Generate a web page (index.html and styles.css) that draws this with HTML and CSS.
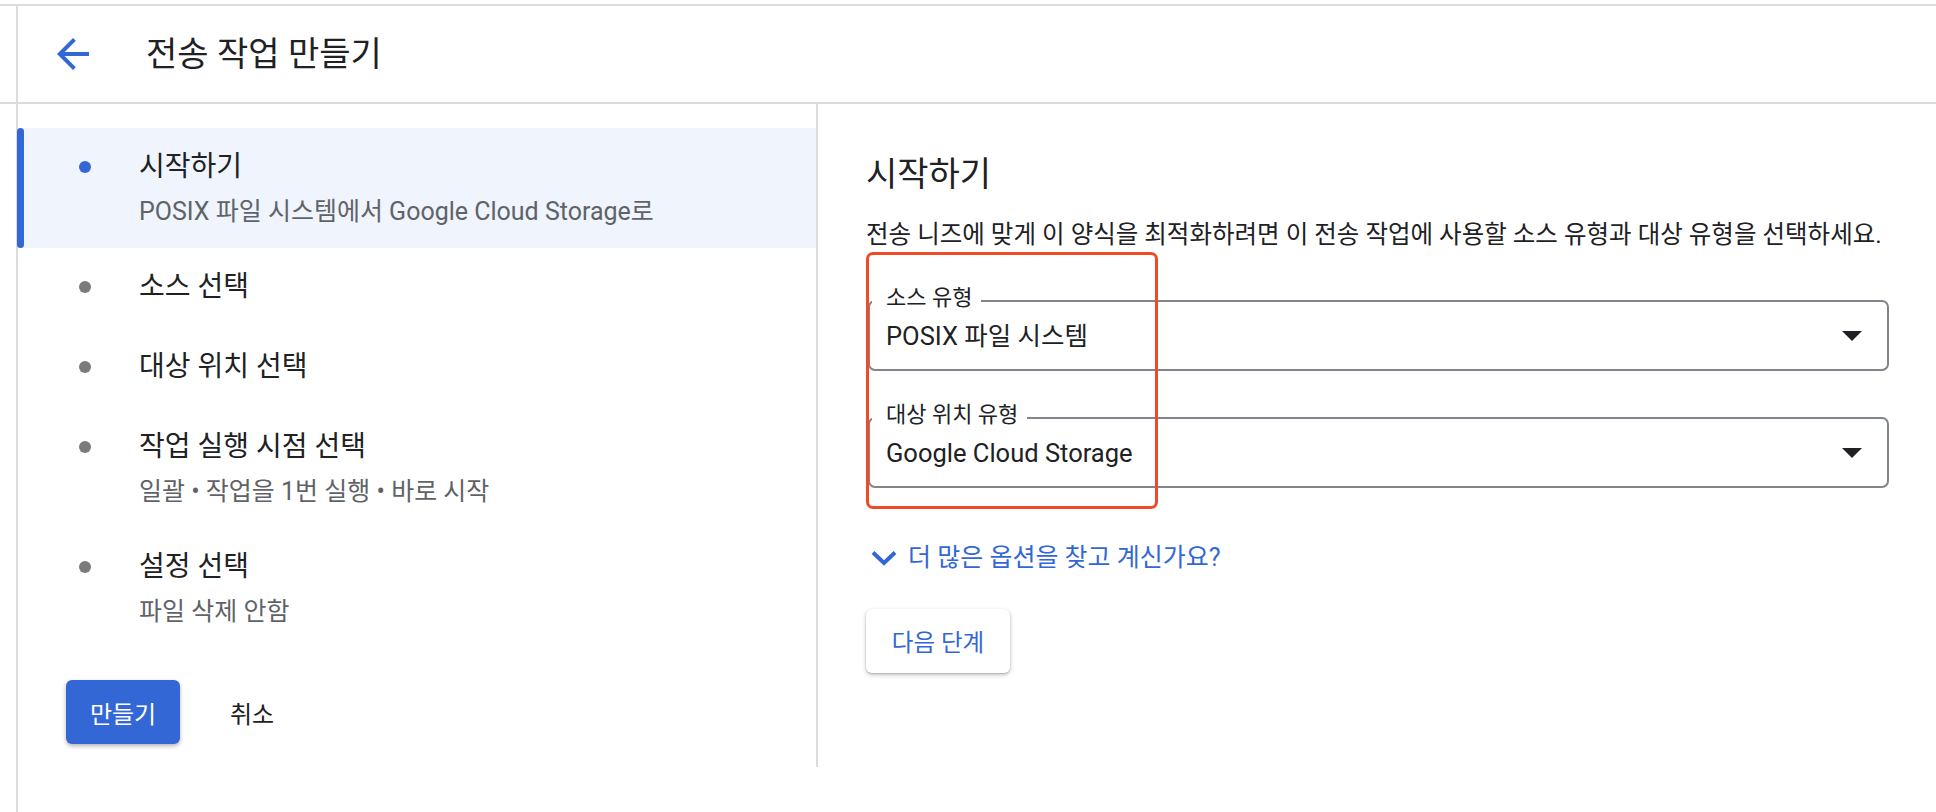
FILE: index.html
```html
<!DOCTYPE html>
<html lang="ko">
<head>
<meta charset="utf-8">
<title>전송 작업 만들기</title>
<link rel="stylesheet" href="styles.css">
</head>
<body>
<div class="app">
  <header class="topbar">
    <div class="topbar-inner">
      <button class="back" aria-label="뒤로">
        <svg viewBox="0 0 24 24" width="48" height="48"><path d="M20 11H7.83l5.59-5.59L12 4l-8 8 8 8 1.41-1.41L7.83 13H20v-2z" fill="#3367d6"/></svg>
      </button>
      <h1 class="title">전송 작업 만들기</h1>
    </div>
  </header>
  <div class="main">
    <aside class="stepper">
      <ol class="steps">
        <li class="step active has-sub">
          <span class="dot"></span>
          <div class="step-text">
            <div class="step-title">시작하기</div>
            <div class="step-sub">POSIX 파일 시스템에서 Google Cloud Storage로</div>
          </div>
        </li>
        <li class="step">
          <span class="dot"></span>
          <div class="step-text"><div class="step-title">소스 선택</div></div>
        </li>
        <li class="step">
          <span class="dot"></span>
          <div class="step-text"><div class="step-title">대상 위치 선택</div></div>
        </li>
        <li class="step has-sub">
          <span class="dot"></span>
          <div class="step-text">
            <div class="step-title">작업 실행 시점 선택</div>
            <div class="step-sub">일괄 • 작업을 1번 실행 • 바로 시작</div>
          </div>
        </li>
        <li class="step has-sub">
          <span class="dot"></span>
          <div class="step-text">
            <div class="step-title">설정 선택</div>
            <div class="step-sub">파일 삭제 안함</div>
          </div>
        </li>
      </ol>
      <div class="actions">
        <button class="btn-primary">만들기</button>
        <button class="btn-text">취소</button>
      </div>
    </aside>
    <section class="content">
      <h2 class="heading">시작하기</h2>
      <p class="desc">전송 니즈에 맞게 이 양식을 최적화하려면 이 전송 작업에 사용할 소스 유형과 대상 유형을 선택하세요.</p>
      <div class="fields">
        <div class="highlight"></div>
        <div class="field">
          <span class="field-label">소스 유형</span>
          <span class="field-value">POSIX 파일 시스템</span>
          <svg class="caret" viewBox="0 0 20 10" width="20" height="10"><polygon points="0,0 20,0 10,10" fill="#202124"/></svg>
        </div>
        <div class="field">
          <span class="field-label">대상 위치 유형</span>
          <span class="field-value">Google Cloud Storage</span>
          <svg class="caret" viewBox="0 0 20 10" width="20" height="10"><polygon points="0,0 20,0 10,10" fill="#202124"/></svg>
        </div>
      </div>
      <a class="more" href="#">
        <svg viewBox="0 0 28 18" width="28" height="18"><polyline points="3,3.5 14,14 25,3.5" fill="none" stroke="#3367d6" stroke-width="4"/></svg>
        <span>더 많은 옵션을 찾고 계신가요?</span>
      </a>
      <button class="btn-secondary">다음 단계</button>
    </section>
  </div>
</div>
</body>
</html>
```

FILE: styles.css
```css
* { box-sizing: border-box; }

html, body {
  margin: 0;
  padding: 0;
  background: #ffffff;
}

body {
  font-family: Roboto, "Noto Sans CJK KR", sans-serif;
  color: #202124;
  height: 812px;
  overflow: hidden;
}

.app {
  padding-top: 4px;
  height: 100%;
  display: flex;
  flex-direction: column;
}

.topbar {
  border-top: 2px solid #dadce0;
  border-bottom: 2px solid #dadce0;
  height: 100px;
  flex: none;
}

.topbar-inner {
  margin-left: 16px;
  border-left: 2px solid #dadce0;
  height: 100%;
  display: flex;
  align-items: center;
  padding-left: 31px;
}

.back {
  border: 0;
  background: none;
  padding: 0;
  width: 48px;
  height: 48px;
  display: flex;
  cursor: pointer;
}

.title {
  margin: 0 0 0 49px;
  font-size: 34px;
  font-weight: 400;
  line-height: 40px;
}

.main {
  flex: 1;
  margin-left: 16px;
  border-left: 2px solid #dadce0;
  display: flex;
  align-items: flex-start;
}

.stepper {
  width: 800px;
  flex: none;
  height: 663px;
  border-right: 2px solid #dadce0;
  padding-top: 24px;
}

.steps {
  list-style: none;
  margin: 0;
  padding: 0;
}

.step {
  position: relative;
  display: flex;
  align-items: flex-start;
  padding: 24px 0 26px 61px;
}

.step.has-sub {
  padding-bottom: 21px;
}

.step.active {
  background: #eff4fd;
}

.step.active::before {
  content: "";
  position: absolute;
  left: -1px;
  top: 0;
  bottom: 0;
  width: 7px;
  border-radius: 4px;
  background: #3367d6;
}

.dot {
  flex: none;
  width: 12px;
  height: 12px;
  border-radius: 50%;
  background: #7b7b7b;
  margin-top: 9px;
}

.step.active .dot {
  background: #3367d6;
}

.step-text {
  margin-left: 48px;
}

.step-title {
  font-size: 28px;
  line-height: 30px;
  color: #202124;
}

.step-sub {
  font-size: 25px;
  line-height: 30px;
  margin-top: 15px;
  color: #5f6368;
}

.actions {
  display: flex;
  align-items: center;
  padding-left: 48px;
  margin-top: 32px;
}

.btn-primary {
  width: 114px;
  height: 64px;
  border: 0;
  border-radius: 6px;
  background: #3367d6;
  color: #ffffff;
  font-family: inherit;
  font-size: 24px;
  box-shadow: 0 2px 4px rgba(0, 0, 0, 0.3);
}

.btn-text {
  margin-left: 34px;
  padding: 0 16px;
  height: 64px;
  border: 0;
  background: none;
  color: #202124;
  font-family: inherit;
  font-size: 24px;
}

.content {
  flex: 1;
  padding: 50px 47px 0 48px;
}

.heading {
  margin: 0;
  font-size: 34px;
  font-weight: 400;
  line-height: 40px;
}

.desc {
  margin: 26px 0 0;
  font-size: 24.5px;
  line-height: 30px;
  color: #202124;
  white-space: nowrap;
}

.fields {
  position: relative;
  margin: 50px 0 0 2px;
  display: flex;
  flex-direction: column;
  gap: 46px;
}

.highlight {
  position: absolute;
  left: -2px;
  top: -48px;
  width: 292px;
  height: 257px;
  border: 3px solid #ef4b26;
  border-radius: 7px;
  z-index: 2;
  pointer-events: none;
}

.field {
  position: relative;
  height: 71px;
  border: 2px solid #80868b;
  border-radius: 7px;
  display: flex;
  align-items: center;
  justify-content: space-between;
  padding: 0 25px 0 16px;
}

.field-label {
  position: absolute;
  left: 2px;
  top: -17px;
  padding: 0 9px 0 14px;
  background: #ffffff;
  font-size: 22px;
  line-height: 26px;
  color: #202124;
}

.field-value {
  font-size: 25.5px;
  line-height: 30px;
  color: #202124;
}

.caret {
  flex: none;
}

.more {
  display: flex;
  align-items: center;
  gap: 10px;
  margin-top: 55px;
  padding-left: 4px;
  color: #3367d6;
  text-decoration: none;
  font-size: 25px;
  line-height: 30px;
}

.btn-secondary {
  display: block;
  margin-top: 36px;
  width: 144px;
  height: 64px;
  border: 0;
  border-radius: 6px;
  background: #ffffff;
  color: #3367d6;
  font-family: inherit;
  font-size: 23.5px;
  box-shadow: 0 1px 2px rgba(0, 0, 0, 0.2), 0 2px 5px rgba(0, 0, 0, 0.2);
}
```
